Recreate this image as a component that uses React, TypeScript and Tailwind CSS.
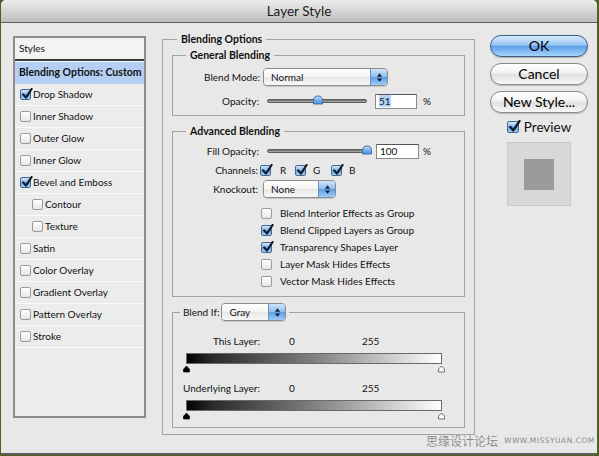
import React from "react";

function Check({ checked, big }: { checked?: boolean; big?: boolean }) {
  return (
    <span
      className={`relative inline-block shrink-0 rounded-[2px] border ${big ? "h-[12px] w-[12px]" : "h-[11px] w-[11px]"} ${
        checked
          ? "border-[#45678f] bg-[linear-gradient(#d3e6fb,#86b8ee_48%,#5f9de3_52%,#a9d1f7)]"
          : "border-[#9a9a9a] bg-[linear-gradient(#ffffff,#e6e6e6)]"
      }`}
    >
      {checked && (
        <svg
          viewBox="0 0 12 12"
          className={`absolute left-[0px] -top-[2px] ${big ? "h-[13px] w-[13px]" : "h-[12px] w-[12px]"}`}
        >
          <path d="M2.2 6.4 L4.9 9.6 L10.6 1" fill="none" stroke="#111c2a" strokeWidth="2.2" strokeLinecap="round" strokeLinejoin="round" />
        </svg>
      )}
    </span>
  );
}

function Arrows() {
  return (
    <svg viewBox="0 0 8 12" className="h-[11px] w-[7px]">
      <path d="M1 5 L4 1.2 L7 5 Z" fill="#16222f" />
      <path d="M1 7 L4 10.8 L7 7 Z" fill="#16222f" />
    </svg>
  );
}

function Select({ value, w }: { value: string; w: string }) {
  return (
    <div
      className={`flex h-[18px] ${w} items-stretch overflow-hidden rounded-[4px] border border-[#8c8c8c] shadow-[0_1px_1px_rgba(0,0,0,0.15)]`}
    >
      <div className="flex flex-1 items-center bg-[linear-gradient(#ffffff,#f4f4f4_50%,#e8e8e8_51%,#f7f7f7)] pl-[7px] text-[10px] text-[#111]">
        {value}
      </div>
      <div className="flex w-[17px] items-center justify-center border-l border-[#6d8fb8] bg-[linear-gradient(#cfe4fb,#8fbff1_48%,#5c9de6_52%,#9ccdf8)]">
        <Arrows />
      </div>
    </div>
  );
}

function Slider({ value }: { value: number }) {
  return (
    <div className="relative flex h-[16px] w-[100px] items-center">
      <div className="h-[4px] w-full rounded-full border border-[#5c5c5c] bg-[linear-gradient(#6a6a6a,#b0b0b0)]" />
      <svg viewBox="0 0 12 10" className="absolute top-[2px] h-[10px] w-[12px]" style={{ left: value - 6 }}>
        <defs>
          <linearGradient id={`tg${value}`} x1="0" y1="0" x2="0" y2="1">
            <stop offset="0" stopColor="#cfe4fb" />
            <stop offset="0.5" stopColor="#79b1ec" />
            <stop offset="1" stopColor="#4f92de" />
          </linearGradient>
        </defs>
        <path d="M1.5 9 L1.5 5.5 Q1.5 1 6 1 Q10.5 1 10.5 5.5 L10.5 9 Z" fill={`url(#tg${value})`} stroke="#3b6796" strokeWidth="0.9" />
      </svg>
    </div>
  );
}

function Bar() {
  return <div className="ml-[13px] h-[11px] w-[256px] border border-[#6a6a6a] bg-[linear-gradient(to_right,#000000,#2a2a2a_10%,#808080_50%,#ffffff)]" />;
}

function Triangles() {
  return (
    <div className="ml-[10px] mt-[1px] flex h-[8px] w-[262px] items-start justify-between">
      <svg viewBox="0 0 8 8" className="h-[8px] w-[7px]">
        <path d="M0.6 7.4 L0.6 4.2 L4 0.6 L7.4 4.2 L7.4 7.4 Z" fill="#000" stroke="#000" strokeWidth="0.8" />
      </svg>
      <svg viewBox="0 0 8 8" className="h-[8px] w-[7px]">
        <path d="M0.6 7.4 L0.6 4.2 L4 0.6 L7.4 4.2 L7.4 7.4 Z" fill="#fff" stroke="#333" strokeWidth="0.8" />
      </svg>
    </div>
  );
}

const styleRows: { label: string; checked?: boolean; indent?: boolean }[] = [
  { label: "Drop Shadow", checked: true },
  { label: "Inner Shadow" },
  { label: "Outer Glow" },
  { label: "Inner Glow" },
  { label: "Bevel and Emboss", checked: true },
  { label: "Contour", indent: true },
  { label: "Texture", indent: true },
  { label: "Satin" },
  { label: "Color Overlay" },
  { label: "Gradient Overlay" },
  { label: "Pattern Overlay" },
  { label: "Stroke" },
];

const optRows: { label: string; checked?: boolean }[] = [
  { label: "Blend Interior Effects as Group" },
  { label: "Blend Clipped Layers as Group", checked: true },
  { label: "Transparency Shapes Layer", checked: true },
  { label: "Layer Mask Hides Effects" },
  { label: "Vector Mask Hides Effects" },
];

export default function App() {
  return (
    <div className="relative h-[456px] w-[599px] overflow-hidden bg-[#4e5f22] font-['Lato',sans-serif] text-[#111]">
      <div className="ml-[1px] flex h-[455px] w-[596px] flex-col rounded-t-[5px] border-b-2 border-[#5c5c5c] bg-[#e8e8e8]">
        {/* Title bar */}
        <div className="flex h-[23px] shrink-0 items-center justify-center rounded-t-[5px] border-b border-[#5f5f5f] bg-[linear-gradient(#ececec,#d6d6d6_50%,#bdbdbd)] text-[13.5px] text-[#1c1c1c]">
          Layer Style
        </div>

        {/* Body */}
        <div className="flex items-start">
          {/* Styles list */}
          <div className="ml-[12px] mt-[13px] flex h-[382px] w-[133px] flex-col border-2 border-[#8c8c8c] bg-[#ececec]">
            <div className="flex h-[23px] items-center border-b-2 border-[#3a3a3a] bg-[#f3f3f3] pl-[4px] text-[10px]">
              Styles
            </div>
            <div className="flex h-[23px] items-center border-t border-b border-t-[#fafafa] border-b-[#c5d3e6] bg-[#b4cff3] pl-[4px] text-[10.5px] font-bold">
              Blending Options: Custom
            </div>
            {styleRows.map((r) => (
              <div
                key={r.label}
                className={`flex h-[22px] items-center gap-[2px] border-b border-[#fafafa] text-[10px] ${r.indent ? "pl-[17px]" : "pl-[5px]"}`}
              >
                <Check checked={r.checked} />
                <span>{r.label}</span>
              </div>
            ))}
          </div>

          {/* Main options */}
          <fieldset className="ml-[16px] mt-[10px] w-[313px] border border-[#a2a2a2] px-[9px] pb-[6px]">
            <legend className="ml-[5px] h-[13px] px-[4px] text-[10.5px] font-bold leading-[13px]">Blending Options</legend>

            {/* General Blending */}
            <fieldset className="mt-[3px] w-[293px] border border-[#a2a2a2] pb-[6px]">
              <legend className="ml-[13px] h-[12px] px-[4px] text-[10.5px] font-bold leading-[12px]">General Blending</legend>
              <div className="mt-[7px] flex h-[18px] items-center text-[10px]">
                <span className="w-[87px] text-right">Blend Mode:</span>
                <div className="ml-[3px]">
                  <Select value="Normal" w="w-[125px]" />
                </div>
              </div>
              <div className="mt-[7px] flex h-[16px] items-center text-[10px]">
                <span className="w-[86px] text-right">Opacity:</span>
                <div className="ml-[8px]">
                  <Slider value={51} />
                </div>
                <div className="ml-[8px] flex h-[15px] w-[42px] items-center border border-[#8a8a8a] border-t-[#555] bg-white pl-[3px]">
                  <span className="bg-[#b3d3fb] leading-[12px]">51</span>
                </div>
                <span className="ml-[6px]">%</span>
              </div>
            </fieldset>

            {/* Advanced Blending */}
            <fieldset className="mt-[9px] w-[293px] border border-[#a2a2a2] pb-[6px]">
              <legend className="ml-[13px] h-[12px] px-[4px] text-[10.5px] font-bold leading-[12px]">Advanced Blending</legend>
              <div className="mt-[6px] flex h-[16px] items-center text-[10px]">
                <span className="w-[86px] text-right">Fill Opacity:</span>
                <div className="ml-[8px]">
                  <Slider value={100} />
                </div>
                <div className="ml-[9px] flex h-[15px] w-[43px] items-center border border-[#8a8a8a] border-t-[#555] bg-white pl-[3px]">
                  100
                </div>
                <span className="ml-[4px]">%</span>
              </div>
              <div className="mt-[3px] flex h-[16px] items-center text-[10px]">
                <span className="w-[85px] text-right">Channels:</span>
                <div className="ml-[2px] flex w-[35px] items-center gap-[9px]">
                  <Check checked />
                  <span>R</span>
                </div>
                <div className="flex w-[36px] items-center gap-[7px]">
                  <Check checked />
                  <span>G</span>
                </div>
                <div className="flex items-center gap-[7px]">
                  <Check checked />
                  <span>B</span>
                </div>
              </div>
              <div className="mt-[2px] flex h-[18px] items-center text-[10px]">
                <span className="w-[85px] text-right">Knockout:</span>
                <div className="ml-[5px]">
                  <Select value="None" w="w-[73px]" />
                </div>
              </div>
              <div className="mt-[7px] flex flex-col">
                {optRows.map((r) => (
                  <div key={r.label} className="ml-[88px] flex h-[17px] items-center gap-[8px] text-[10px]">
                    <Check checked={r.checked} />
                    <span>{r.label}</span>
                  </div>
                ))}
              </div>
            </fieldset>

            {/* Blend If */}
            <fieldset className="mt-[6px] w-[293px] border border-[#a2a2a2] pb-[7px]">
              <legend className="ml-[7px] h-[18px] px-[3px]">
                <div className="flex h-[18px] items-center gap-[2px] text-[10px]">
                  <span>Blend If:</span>
                  <Select value="Gray" w="w-[65px]" />
                </div>
              </legend>
              <div className="mt-[13px] flex h-[14px] items-center text-[10px]">
                <span className="w-[87px] text-right">This Layer:</span>
                <span className="ml-[29px] w-[73px]">0</span>
                <span>255</span>
              </div>
              <div className="mt-[5px]">
                <Bar />
              </div>
              <Triangles />
              <div className="mt-[8px] flex h-[14px] items-center text-[10px]">
                <span className="w-[87px] text-right">Underlying Layer:</span>
                <span className="ml-[29px] w-[73px]">0</span>
                <span>255</span>
              </div>
              <div className="mt-[5px]">
                <Bar />
              </div>
              <Triangles />
            </fieldset>
          </fieldset>

          {/* Right column */}
          <div className="ml-[15px] mt-[12px] flex w-[98px] flex-col items-center">
            <button className="flex h-[22px] w-[98px] items-center justify-center rounded-full border border-[#3d5f8c] bg-[linear-gradient(#d9eafc,#98c6f3_45%,#5d9fe8_52%,#a4d4fc)] text-[14px] leading-none text-black shadow-[0_1px_1px_rgba(0,0,0,0.25)]">
              OK
            </button>
            <button className="mt-[6px] flex h-[22px] w-[98px] items-center justify-center rounded-full border border-[#8a8a8a] bg-[linear-gradient(#ffffff,#f3f3f3_45%,#e0e0e0_52%,#f7f7f7)] text-[14px] leading-none text-black shadow-[0_1px_1px_rgba(0,0,0,0.2)]">
              Cancel
            </button>
            <button className="mt-[6px] flex h-[22px] w-[98px] items-center justify-center rounded-full border border-[#8a8a8a] bg-[linear-gradient(#ffffff,#f3f3f3_45%,#e0e0e0_52%,#f7f7f7)] text-[14px] leading-none text-black shadow-[0_1px_1px_rgba(0,0,0,0.2)]">
              New Style...
            </button>
            <div className="mt-[8px] flex h-[12px] items-center gap-[5px] text-[13.5px]">
              <Check checked big />
              <span>Preview</span>
            </div>
            <div className="mt-[9px] flex h-[64px] w-[64px] items-center justify-center border border-[#c9c9c9] bg-[#d8d8d8]">
              <div className="h-[31px] w-[30px] bg-[#9b9b9b]" />
            </div>
          </div>
        </div>
      </div>

      {/* Watermark */}
      <div className="absolute left-[426px] top-[434px] flex items-center gap-[6px] text-[#8a8a8a]">
        <span className="font-['Noto_Sans_CJK_SC',sans-serif] text-[12px] leading-[14px] [text-shadow:0_0_1px_#fff]">思缘设计论坛</span>
        <span className="font-['DejaVu_Sans',sans-serif] text-[7.5px] tracking-[0.5px]">WWW.MISSYUAN.COM</span>
      </div>
    </div>
  );
}
